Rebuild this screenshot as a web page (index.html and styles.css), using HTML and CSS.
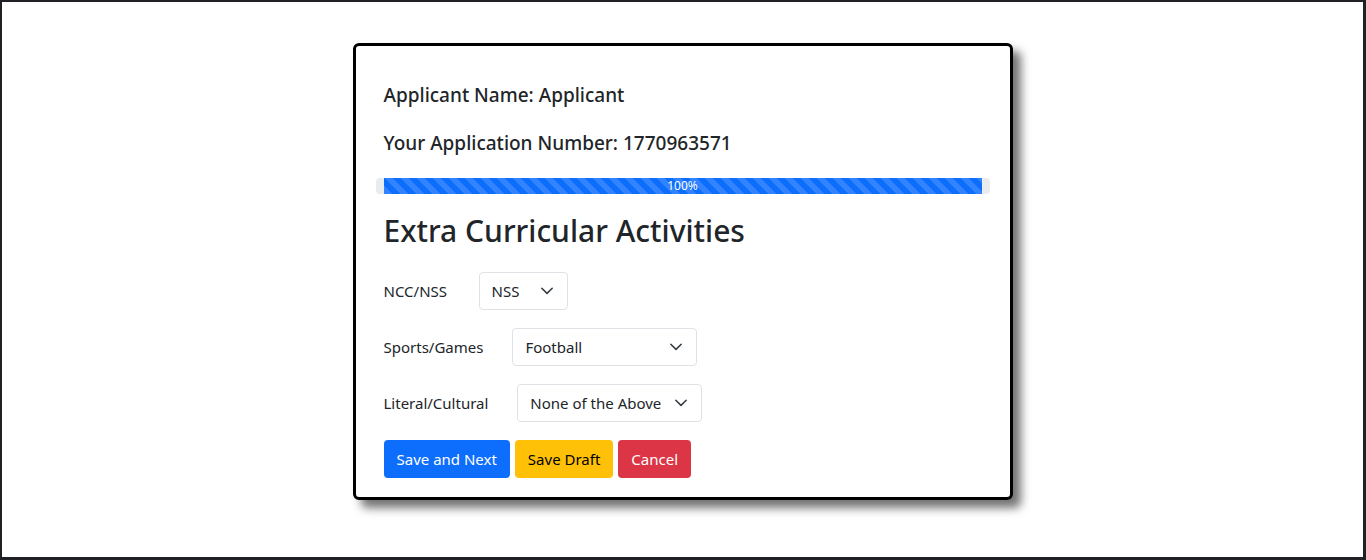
FILE: index.html
```html
<!DOCTYPE html>
<html lang="en">
<head>
<meta charset="utf-8">
<title>Extra Curricular Activities</title>
<link rel="stylesheet" href="styles.css">
</head>
<body>
<div class="frame">
  <div class="card">
    <h5 class="info">Applicant Name: Applicant</h5>
    <h5 class="info">Your Application Number: 1770963571</h5>
    <div class="progress">
      <div class="progress-bar" style="width:100%">100%</div>
    </div>
    <h2 class="title">Extra Curricular Activities</h2>
    <div class="row">
      <label class="label">NCC/NSS</label>
      <div class="select w-sm"><span>NSS</span><svg class="chev" viewBox="0 0 12 8" width="12" height="8"><path d="M0.8 1.2 6 6.4 11.2 1.2" fill="none" stroke="#343a40" stroke-width="1.5" stroke-linecap="round" stroke-linejoin="round"/></svg></div>
    </div>
    <div class="row">
      <label class="label">Sports/Games</label>
      <div class="select w-lg"><span>Football</span><svg class="chev" viewBox="0 0 12 8" width="12" height="8"><path d="M0.8 1.2 6 6.4 11.2 1.2" fill="none" stroke="#343a40" stroke-width="1.5" stroke-linecap="round" stroke-linejoin="round"/></svg></div>
    </div>
    <div class="row">
      <label class="label">Literal/Cultural</label>
      <div class="select w-lg"><span>None of the Above</span><svg class="chev" viewBox="0 0 12 8" width="12" height="8"><path d="M0.8 1.2 6 6.4 11.2 1.2" fill="none" stroke="#343a40" stroke-width="1.5" stroke-linecap="round" stroke-linejoin="round"/></svg></div>
    </div>
    <div class="actions">
      <button class="btn btn-primary">Save and Next</button>
      <button class="btn btn-warning">Save Draft</button>
      <button class="btn btn-danger">Cancel</button>
    </div>
  </div>
</div>
</body>
</html>
```
FILE: styles.css
```css
* { box-sizing: border-box; }
html, body { margin: 0; padding: 0; }
body {
  font-family: "Noto Sans", "Open Sans", sans-serif;
  color: #212529;
  background: #fff;
}
.frame {
  height: 560px;
  border-style: solid;
  border-color: #202124;
  border-width: 2px 3px 3px 2px;
  display: flex;
  justify-content: center;
  align-items: flex-start;
  padding-top: 41px;
}
.card {
  width: 660px;
  border: 3px solid #000;
  border-radius: 6px;
  background: #fff;
  box-shadow: 8px 8px 10px rgba(0,0,0,0.55);
  padding: 37px 28px 19px;
}
.info {
  margin: 0 0 24px;
  font-size: 19px;
  font-weight: 500;
  line-height: 24px;
}
.info + .info { margin-bottom: 23px; }
.progress {
  margin: 0 -8px 18px;
  padding: 0 8px;
  height: 16px;
  background: #e9ecef;
  border-radius: 4px;
  display: flex;
}
.progress-bar {
  height: 16px;
  background-color: #0d6efd;
  background-image: linear-gradient(45deg, rgba(255,255,255,.15) 25%, transparent 25%, transparent 50%, rgba(255,255,255,.15) 50%, rgba(255,255,255,.15) 75%, transparent 75%, transparent);
  background-size: 16px 16px;
  color: #fff;
  font-size: 12px;
  line-height: 16px;
  text-align: center;
}
.title {
  margin: 0 0 22px;
  font-size: 30px;
  font-weight: 500;
  line-height: 38px;
}
.row {
  display: flex;
  align-items: center;
  gap: 29px;
  margin-bottom: 18px;
}
.label {
  font-size: 15px;
  line-height: 24px;
}
.label:first-child { min-width: 66px; }
.select {
  height: 38px;
  border: 1px solid #dee2e6;
  border-radius: 4px;
  display: flex;
  align-items: center;
  justify-content: space-between;
  padding: 0 14px 0 12px;
  font-size: 15px;
}
.w-sm { width: 89px; }
.w-lg { width: 185px; }
.chev { display: block; flex: none; }
.actions {
  display: flex;
  gap: 5px;
}
.btn {
  height: 38px;
  border: 1px solid transparent;
  border-radius: 4px;
  padding: 0 12px;
  font-family: inherit;
  font-size: 15px;
  line-height: 24px;
}
.btn-primary { background: #0d6efd; color: #fff; }
.btn-warning { background: #ffc107; color: #000; }
.btn-danger { background: #dc3545; color: #fff; }
```
